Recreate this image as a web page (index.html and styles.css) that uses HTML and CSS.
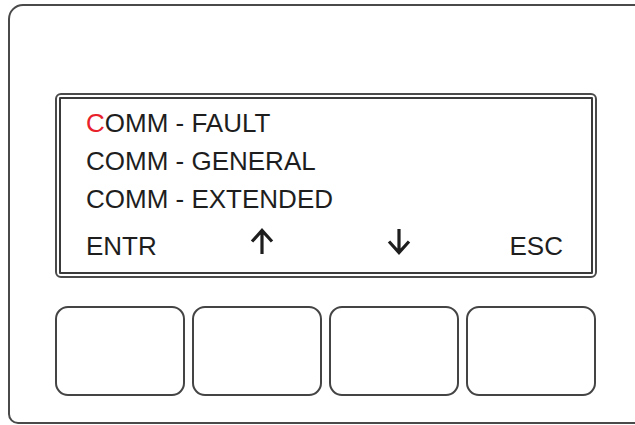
FILE: index.html
```html
<!DOCTYPE html>
<html>
<head>
<meta charset="utf-8">
<link rel="stylesheet" href="styles.css">
</head>
<body>
<div class="page">
<div class="frame">
  <div class="display">
    <div class="screen">
      <div class="line"><span class="cursor">C</span>OMM - FAULT</div>
      <div class="line">COMM - GENERAL</div>
      <div class="line">COMM - EXTENDED</div>
      <div class="line softkeys">
        <span>ENTR</span>
        <span><svg class="arrow" viewBox="0 0 24 27" width="24" height="27"><path d="M12 26V2M2 13.5L12 2.5l10 11" fill="none" stroke="#1e1e1e" stroke-width="3.2"/></svg></span>
        <span><svg class="arrow" viewBox="0 0 24 27" width="24" height="27"><path d="M12 1v24M2 13.5L12 24.5l10-11" fill="none" stroke="#1e1e1e" stroke-width="3.2"/></svg></span>
        <span class="esc">ESC</span>
      </div>
    </div>
  </div>
  <div class="keys">
    <div class="key"></div>
    <div class="key"></div>
    <div class="key"></div>
    <div class="key"></div>
  </div>
</div>
</div>
</body>
</html>
```
FILE: styles.css
```css
html, body {
  margin: 0;
  padding: 0;
  background: #fff;
}
.page {
  width: 635px;
  height: 425px;
  overflow: hidden;
  padding: 4px 0 0 8px;
  box-sizing: border-box;
}
.frame {
  box-sizing: border-box;
  width: 700px;
  height: 420px;
  border: 2px solid #4a4a4a;
  border-radius: 15px 14px 14px 10px;
  padding: 87px 0 0 45px;
}
.display {
  box-sizing: border-box;
  width: 542px;
  height: 185px;
  border: 2px solid #4a4a4a;
  border-radius: 6px;
  padding: 2px;
}
.screen {
  box-sizing: border-box;
  height: 100%;
  border: 2px solid #3a3a3a;
  border-radius: 1px;
  padding: 5px 28px 0 25px;
  font-family: "Liberation Sans", Arial, sans-serif;
  font-size: 26px;
  color: #1e1e1e;
}
.line {
  height: 38px;
  line-height: 38px;
  white-space: nowrap;
}
.cursor {
  color: #e8212b;
}
.softkeys {
  margin-top: 9px;
  display: grid;
  grid-template-columns: 164px 137px 1fr auto;
}
.arrow {
  display: inline-block;
  vertical-align: baseline;
}
.keys {
  display: flex;
  gap: 7px;
  margin-top: 28px;
}
.key {
  box-sizing: border-box;
  width: 130px;
  height: 90px;
  border: 2px solid #444;
  border-radius: 13px;
}
```
